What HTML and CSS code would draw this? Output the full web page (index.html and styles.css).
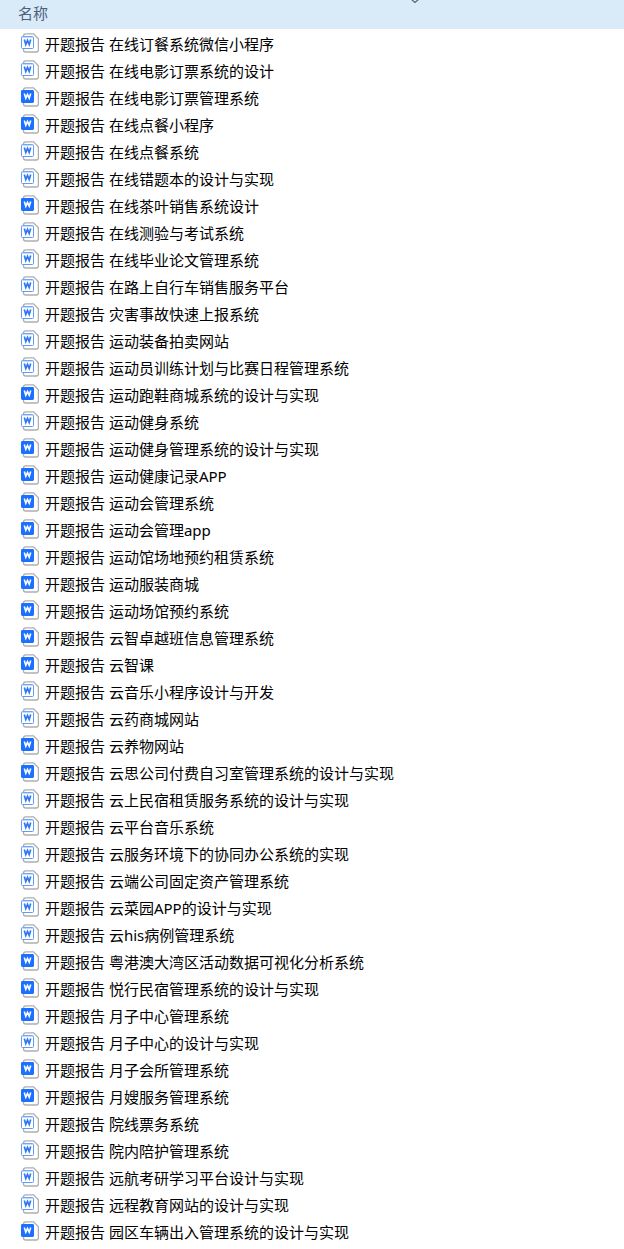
FILE: index.html
```
<!DOCTYPE html>
<html lang="zh-CN">
<head>
<meta charset="utf-8">
<meta name="viewport" content="width=device-width, initial-scale=1">
<title>开题报告</title>
<link rel="stylesheet" href="styles.css">
</head>
<body>
<svg class="sprite" aria-hidden="true">
  <symbol id="page" viewBox="0 0 18 20">
    <path d="M2.5 4V3Q2.5 0.8 4.7 0.8H12.6L17.4 5.8V17Q17.4 19 15.4 19H4.7Q2.5 19 2.5 17V15" fill="#fff" stroke="#aeaeae" stroke-width="1.3"/>
  </symbol>
  <symbol id="doc" viewBox="0 0 18 20">
    <use href="#page"/>
    <rect x="0.5" y="3.5" width="12" height="12" rx="1" fill="#fff" stroke="#619bfa"/>
    <path d="M1 4.3H12" stroke="#b5d2ff"/>
    <path d="M3.3 6.4L4.8 11.4L6.5 7.4L8.2 11.4L9.7 6.4" fill="none" stroke="#2f78f0" stroke-width="1.7"/>
  </symbol>
  <symbol id="docx" viewBox="0 0 18 20">
    <use href="#page"/>
    <rect x="0" y="3" width="13" height="13" rx="1.4" fill="#1c70ff"/>
    <path d="M3.3 6.4L4.8 11.2L6.5 7.4L8.2 11.2L9.7 6.4" fill="none" stroke="#fff" stroke-width="1.6"/>
  </symbol>
</svg>
<header class="columns">
  <button class="column" type="button">名称</button>
  <svg class="sort" viewBox="0 0 8 4" aria-hidden="true"><path d="M0.5 -0.5L4 2.5L7.5 -0.5" fill="none" stroke="#5c6670" stroke-width="1.2"/></svg>
</header>
<ul class="files">
  <li class="file"><svg class="icon"><use href="#doc"/></svg><span>开题报告 在线订餐系统微信小程序</span></li>
  <li class="file"><svg class="icon"><use href="#doc"/></svg><span>开题报告 在线电影订票系统的设计</span></li>
  <li class="file"><svg class="icon"><use href="#docx"/></svg><span>开题报告 在线电影订票管理系统</span></li>
  <li class="file"><svg class="icon"><use href="#docx"/></svg><span>开题报告 在线点餐小程序</span></li>
  <li class="file"><svg class="icon"><use href="#doc"/></svg><span>开题报告 在线点餐系统</span></li>
  <li class="file"><svg class="icon"><use href="#doc"/></svg><span>开题报告 在线错题本的设计与实现</span></li>
  <li class="file"><svg class="icon"><use href="#docx"/></svg><span>开题报告 在线茶叶销售系统设计</span></li>
  <li class="file"><svg class="icon"><use href="#doc"/></svg><span>开题报告 在线测验与考试系统</span></li>
  <li class="file"><svg class="icon"><use href="#doc"/></svg><span>开题报告 在线毕业论文管理系统</span></li>
  <li class="file"><svg class="icon"><use href="#doc"/></svg><span>开题报告 在路上自行车销售服务平台</span></li>
  <li class="file"><svg class="icon"><use href="#doc"/></svg><span>开题报告 灾害事故快速上报系统</span></li>
  <li class="file"><svg class="icon"><use href="#doc"/></svg><span>开题报告 运动装备拍卖网站</span></li>
  <li class="file"><svg class="icon"><use href="#doc"/></svg><span>开题报告 运动员训练计划与比赛日程管理系统</span></li>
  <li class="file"><svg class="icon"><use href="#docx"/></svg><span>开题报告 运动跑鞋商城系统的设计与实现</span></li>
  <li class="file"><svg class="icon"><use href="#doc"/></svg><span>开题报告 运动健身系统</span></li>
  <li class="file"><svg class="icon"><use href="#docx"/></svg><span>开题报告 运动健身管理系统的设计与实现</span></li>
  <li class="file"><svg class="icon"><use href="#docx"/></svg><span>开题报告 运动健康记录APP</span></li>
  <li class="file"><svg class="icon"><use href="#docx"/></svg><span>开题报告 运动会管理系统</span></li>
  <li class="file"><svg class="icon"><use href="#docx"/></svg><span>开题报告 运动会管理app</span></li>
  <li class="file"><svg class="icon"><use href="#docx"/></svg><span>开题报告 运动馆场地预约租赁系统</span></li>
  <li class="file"><svg class="icon"><use href="#docx"/></svg><span>开题报告 运动服装商城</span></li>
  <li class="file"><svg class="icon"><use href="#docx"/></svg><span>开题报告 运动场馆预约系统</span></li>
  <li class="file"><svg class="icon"><use href="#docx"/></svg><span>开题报告 云智卓越班信息管理系统</span></li>
  <li class="file"><svg class="icon"><use href="#docx"/></svg><span>开题报告 云智课</span></li>
  <li class="file"><svg class="icon"><use href="#doc"/></svg><span>开题报告 云音乐小程序设计与开发</span></li>
  <li class="file"><svg class="icon"><use href="#doc"/></svg><span>开题报告 云药商城网站</span></li>
  <li class="file"><svg class="icon"><use href="#docx"/></svg><span>开题报告 云养物网站</span></li>
  <li class="file"><svg class="icon"><use href="#docx"/></svg><span>开题报告 云思公司付费自习室管理系统的设计与实现</span></li>
  <li class="file"><svg class="icon"><use href="#doc"/></svg><span>开题报告 云上民宿租赁服务系统的设计与实现</span></li>
  <li class="file"><svg class="icon"><use href="#doc"/></svg><span>开题报告 云平台音乐系统</span></li>
  <li class="file"><svg class="icon"><use href="#doc"/></svg><span>开题报告 云服务环境下的协同办公系统的实现</span></li>
  <li class="file"><svg class="icon"><use href="#doc"/></svg><span>开题报告 云端公司固定资产管理系统</span></li>
  <li class="file"><svg class="icon"><use href="#doc"/></svg><span>开题报告 云菜园APP的设计与实现</span></li>
  <li class="file"><svg class="icon"><use href="#doc"/></svg><span>开题报告 云his病例管理系统</span></li>
  <li class="file"><svg class="icon"><use href="#docx"/></svg><span>开题报告 粤港澳大湾区活动数据可视化分析系统</span></li>
  <li class="file"><svg class="icon"><use href="#docx"/></svg><span>开题报告 悦行民宿管理系统的设计与实现</span></li>
  <li class="file"><svg class="icon"><use href="#docx"/></svg><span>开题报告 月子中心管理系统</span></li>
  <li class="file"><svg class="icon"><use href="#doc"/></svg><span>开题报告 月子中心的设计与实现</span></li>
  <li class="file"><svg class="icon"><use href="#docx"/></svg><span>开题报告 月子会所管理系统</span></li>
  <li class="file"><svg class="icon"><use href="#docx"/></svg><span>开题报告 月嫂服务管理系统</span></li>
  <li class="file"><svg class="icon"><use href="#doc"/></svg><span>开题报告 院线票务系统</span></li>
  <li class="file"><svg class="icon"><use href="#doc"/></svg><span>开题报告 院内陪护管理系统</span></li>
  <li class="file"><svg class="icon"><use href="#doc"/></svg><span>开题报告 远航考研学习平台设计与实现</span></li>
  <li class="file"><svg class="icon"><use href="#doc"/></svg><span>开题报告 远程教育网站的设计与实现</span></li>
  <li class="file"><svg class="icon"><use href="#docx"/></svg><span>开题报告 园区车辆出入管理系统的设计与实现</span></li>
</ul>
</body>
</html>
```

FILE: styles.css
```
body {
  margin: 0;
  background: #fff;
  color: #000;
  font-family: "Noto Sans", "Noto Sans CJK SC", sans-serif;
  font-size: 15px;
}

.sprite {
  position: absolute;
  width: 0;
  height: 0;
}

.columns {
  position: relative;
  display: flex;
  height: 29px;
  background: #d9ebf9;
}

.column {
  flex: 1;
  padding: 0 18px 2px;
  border: 0;
  background: none;
  color: #4c607a;
  font: inherit;
  line-height: 27px;
  text-align: left;
}

/* Sort arrow sits over the name column's top edge */
.sort {
  position: absolute;
  top: 0;
  left: 411px;
  width: 8px;
  height: 4px;
}

.files {
  margin: 0;
  padding: 2px 0 3px;
  list-style: none;
}

.file {
  display: flex;
  align-items: center;
  gap: 6px;
  height: 27px;
  padding-left: 21px;
  line-height: 27px;
  white-space: nowrap;
}

.icon {
  flex: none;
  width: 18px;
  height: 20px;
  margin-bottom: 3px;
}
```
